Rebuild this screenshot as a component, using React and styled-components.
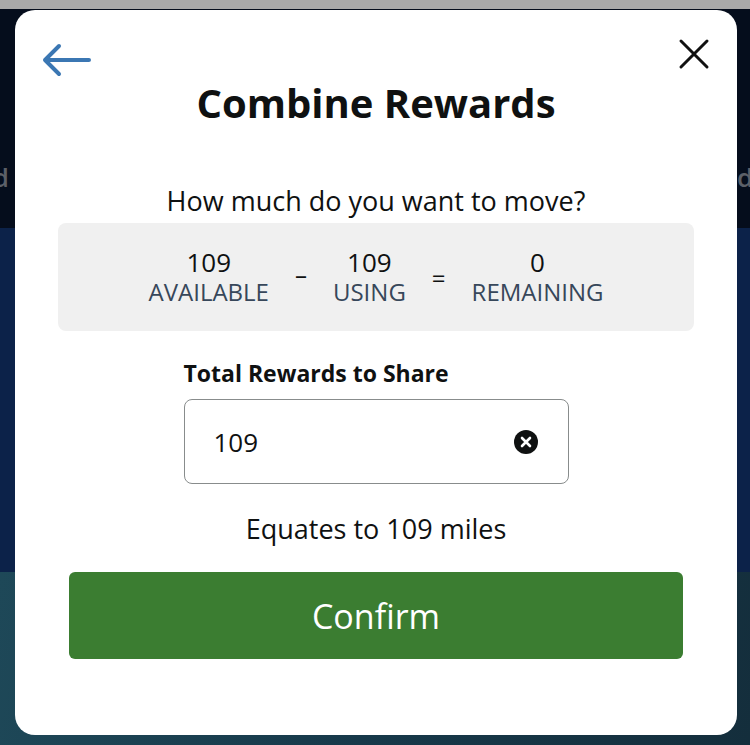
import styled, { createGlobalStyle } from "styled-components";

const GlobalStyle = createGlobalStyle`
  html, body {
    margin: 0;
    padding: 0;
    background: #050d1c;
  }
  * {
    box-sizing: border-box;
  }
`;

const BackArrow = () => (
  <svg width="52" height="36" viewBox="0 0 52 36" fill="none">
    <path d="M3 18 H47 M3 18 L17 4 M3 18 L17 32" stroke="#3b77b3" strokeWidth="4" strokeLinecap="round" strokeLinejoin="round" />
  </svg>
);

const CloseIcon = () => (
  <svg width="32" height="32" viewBox="0 0 32 32" fill="none">
    <path d="M3 3 L29 29 M29 3 L3 29" stroke="#111" strokeWidth="3" strokeLinecap="round" />
  </svg>
);

const ClearIcon = () => (
  <svg width="24" height="24" viewBox="0 0 24 24">
    <circle cx="12" cy="12" r="12" fill="#0f1111" />
    <path d="M8 8 L16 16 M16 8 L8 16" stroke="#fff" strokeWidth="2.6" strokeLinecap="round" />
  </svg>
);

export default function App() {
  return (
    <>
      <GlobalStyle />
      <Page>
        <StatusStrip />
        <HeaderBand>
          <EdgeTab $side="left">
            <span>Card</span>
          </EdgeTab>
          <EdgeTab $side="right">
            <span>details</span>
          </EdgeTab>
        </HeaderBand>
        <MiddleBand />
        <BottomBand />

        <Modal>
          <TopRow>
            <IconButton $offset={4}>
              <BackArrow />
            </IconButton>
            <IconButton>
              <CloseIcon />
            </IconButton>
          </TopRow>
          <Title>Combine Rewards</Title>
          <Question>How much do you want to move?</Question>
          <Summary>
            <Figure>
              <Amount>109</Amount>
              <Caption>AVAILABLE</Caption>
            </Figure>
            <Operator $shift={-2}>–</Operator>
            <Figure>
              <Amount>109</Amount>
              <Caption>USING</Caption>
            </Figure>
            <Operator $shift={1}>=</Operator>
            <Figure>
              <Amount>0</Amount>
              <Caption>REMAINING</Caption>
            </Figure>
          </Summary>
          <Field>
            <FieldLabel>Total Rewards to Share</FieldLabel>
            <InputBox>
              <InputValue>109</InputValue>
              <ClearIcon />
            </InputBox>
          </Field>
          <Equates>Equates to 109 miles</Equates>
          <ConfirmButton>Confirm</ConfirmButton>
        </Modal>
      </Page>
    </>
  );
}

const Page = styled.div`
  position: relative;
  width: 750px;
  height: 745px;
  overflow: hidden;
  display: flex;
  flex-direction: column;
  font-family: "Open Sans", "Noto Sans", sans-serif;
`;

const StatusStrip = styled.div`
  height: 9px;
  background: #a9a9a9;
`;

const HeaderBand = styled.div`
  height: 219px;
  background: #050d1c;
  display: flex;
  justify-content: space-between;
  align-items: flex-end;
  padding-bottom: 34px;
`;

const EdgeTab = styled.div`
  width: ${(p) => (p.$side === "left" ? "9px" : "13px")};
  overflow: hidden;
  display: flex;
  justify-content: ${(p) => (p.$side === "left" ? "flex-end" : "flex-start")};
  font-size: 26px;
  line-height: 34px;
  font-weight: 600;
  color: #5c6068;
  white-space: nowrap;
`;

const MiddleBand = styled.div`
  height: 344px;
  background: #0c2249;
`;

const BottomBand = styled.div`
  flex: 1;
  background: linear-gradient(100deg, #1e4858 0%, #17394a 50%, #142e3c 100%);
`;

const Modal = styled.div`
  position: absolute;
  top: 10px;
  left: 15px;
  width: 722px;
  height: 725px;
  background: #fff;
  border-radius: 20px;
  display: flex;
  flex-direction: column;
  padding: 28px 27px 0;
`;

const TopRow = styled.div`
  height: 38px;
  display: flex;
  justify-content: space-between;
  align-items: flex-start;
`;

const IconButton = styled.div`
  display: flex;
  margin-top: ${(p) => p.$offset || 0}px;
`;

const Title = styled.h1`
  margin: 4px 0 0;
  font-size: 40px;
  line-height: 46px;
  font-weight: 700;
  color: #0f1111;
  text-align: center;
`;

const Question = styled.p`
  margin: 58px 0 0;
  font-size: 27px;
  line-height: 34px;
  color: #0f1111;
  text-align: center;
`;

const Summary = styled.div`
  margin: 5px 16px 0;
  height: 108px;
  background: #f0f0f0;
  border-radius: 8px;
  display: flex;
  justify-content: center;
  align-items: center;
  gap: 26px;
`;

const Figure = styled.div`
  display: flex;
  flex-direction: column;
  align-items: center;
`;

const Amount = styled.span`
  font-size: 26px;
  line-height: 30px;
  color: #0f1111;
`;

const Caption = styled.span`
  font-size: 24px;
  line-height: 30px;
  color: #37475a;
`;

const Operator = styled.span`
  font-size: 24px;
  line-height: 30px;
  color: #0f1111;
  position: relative;
  top: ${(p) => p.$shift || 0}px;
`;

const Field = styled.div`
  width: 385px;
  align-self: center;
  margin-top: 28px;
  display: flex;
  flex-direction: column;
`;

const FieldLabel = styled.label`
  font-size: 23px;
  line-height: 28px;
  font-weight: 700;
  color: #0f1111;
  margin-bottom: 12px;
`;

const InputBox = styled.div`
  height: 85px;
  border: 1.5px solid #888c8c;
  border-radius: 8px;
  display: flex;
  align-items: center;
  justify-content: space-between;
  padding: 0 30px 0 29px;
`;

const InputValue = styled.span`
  font-size: 26px;
  color: #0f1111;
`;

const Equates = styled.p`
  margin: 28px 0 0;
  font-size: 27px;
  line-height: 34px;
  color: #0f1111;
  text-align: center;
`;

const ConfirmButton = styled.button`
  margin: 26px 27px 0;
  height: 87px;
  border: none;
  border-radius: 6px;
  background: #3b7d31;
  color: #fff;
  font-family: inherit;
  font-size: 34px;
  cursor: pointer;
`;
